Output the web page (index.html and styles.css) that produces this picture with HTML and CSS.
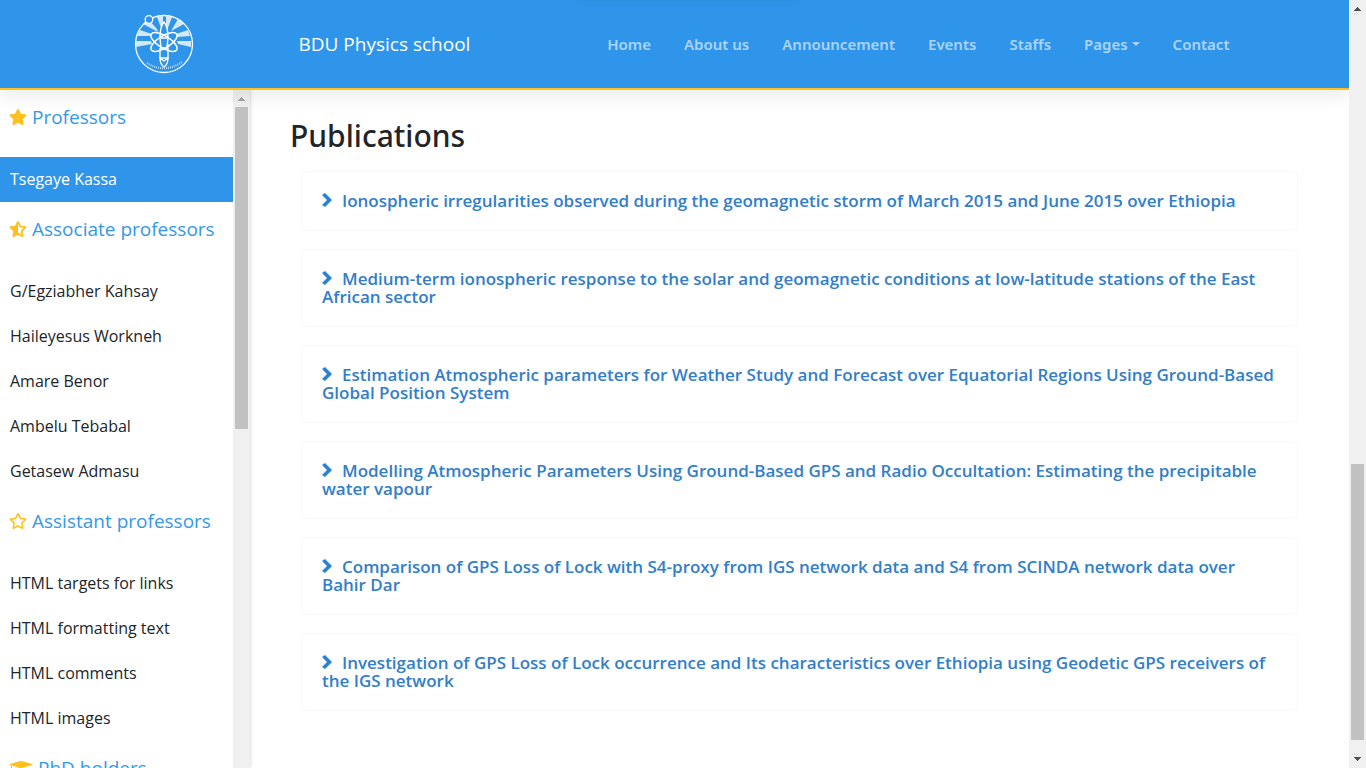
FILE: index.html
```html
<!DOCTYPE html>
<html lang="en">
<head>
<meta charset="utf-8">
<meta name="viewport" content="width=device-width, initial-scale=1">
<title>BDU Physics school</title>
<link rel="stylesheet" href="styles.css">
</head>
<body>
<div class="app">
  <div class="page">
    <header class="header">
      <div class="header-inner">
        <a class="logo" href="#" aria-label="Physics department">
          <svg viewBox="0 0 80 80" width="80" height="80" fill="none" stroke="#fff">
            <g fill="#d3e8fa" stroke="none">
              <path d="M39 29 33 13 39 12Z"/>
              <path d="M42 29 42 12 48 13Z"/>
              <path d="M34 28 19 20 23 16 26 17 33 25Z"/>
              <path d="M47 27 54 15 60 20Z"/>
              <path d="M27 32 13 32 16 26 28 30Z"/>
              <path d="M52 30 64 26 66 32 53 33Z"/>
              <path d="M28 40 12 43 12 37 27 37Z"/>
              <path d="M53 37 67 37 67 43 54 40Z"/>
            </g>
            <circle cx="40" cy="40" r="28.5" stroke-width="1.3"/>
            <circle cx="25" cy="15.500" r="3.800" fill="#2f95ea" stroke-width="1.300"/>
            <path d="M36 34C36 27 36.500 22 40 18C43.500 22 44 27 44 34L43 44H37ZM37 34H43M36 44V54H44V44" fill="#2f95ea" stroke-width="1.400"/>
            <ellipse cx="40" cy="38" rx="15" ry="6" transform="rotate(32 40 38)" stroke-width="1.500"/>
            <ellipse cx="40" cy="38" rx="15" ry="6" transform="rotate(-32 40 38)" stroke-width="1.500"/>
            <circle cx="44" cy="42" r="1.700" fill="#fff" stroke="none"/>
            <path d="M36 54C36 58 37 61 40 63C43 61 44 58 44 54L40 57Z" stroke-width="1.300"/>
            <path d="M23 59Q40 70 58 58" stroke="#bddcf8" stroke-width="2" stroke-dasharray="1 1"/>
          </svg>
        </a>
        <a class="brand" href="#">BDU Physics school</a>
        <nav class="nav" aria-label="Main">
          <a href="#">Home</a>
          <a href="#">About us</a>
          <a href="#">Announcement</a>
          <a href="#">Events</a>
          <a href="#">Staffs</a>
          <button type="button" class="nav-drop">Pages</button>
          <a href="#">Contact</a>
        </nav>
      </div>
    </header>
    <div class="body">
      <aside class="sidebar">
        <div class="side-list">
          <h2 class="group"><svg viewBox="0 0 576 512" width="18" height="16"><path d="M259 18 194 150 48 171c-26 4-37 36-18 55l106 103-25 145c-4 26 23 46 46 34l131-69 131 69c23 12 50-8 46-34l-25-145 106-103c19-19 8-51-18-55l-146-21-65-132c-12-24-46-24-58 0z"/></svg>Professors</h2>
          <a class="person active" href="#">Tsegaye Kassa</a>
          <h2 class="group"><svg viewBox="0 0 576 512" width="18" height="16"><path fill-rule="evenodd" d="M259 18 194 150 48 171c-26 4-37 36-18 55l106 103-25 145c-4 26 23 46 46 34l131-69 131 69c23 12 50-8 46-34l-25-145 106-103c19-19 8-51-18-55l-146-21-65-132c-12-24-46-24-58 0zM288 85l55 115 123 18-89 87 21 123-110-58z"/></svg>Associate professors</h2>
          <a class="person" href="#">G/Egziabher Kahsay</a>
          <a class="person" href="#">Haileyesus Workneh</a>
          <a class="person" href="#">Amare Benor</a>
          <a class="person" href="#">Ambelu Tebabal</a>
          <a class="person" href="#">Getasew Admasu</a>
          <h2 class="group"><svg viewBox="0 0 576 512" width="18" height="16"><path fill-rule="evenodd" d="M259 18 194 150 48 171c-26 4-37 36-18 55l106 103-25 145c-4 26 23 46 46 34l131-69 131 69c23 12 50-8 46-34l-25-145 106-103c19-19 8-51-18-55l-146-21-65-132c-12-24-46-24-58 0zM288 72l-60 123-135 20 98 95-23 135 120-63 120 63-23-135 98-95-135-20z"/></svg>Assistant professors</h2>
          <a class="person" href="#">HTML targets for links</a>
          <a class="person" href="#">HTML formatting text</a>
          <a class="person" href="#">HTML comments</a>
          <a class="person" href="#">HTML images</a>
          <h2 class="group"><svg viewBox="0 0 24 18" width="24" height="18"><path d="M1 5 11 2Q12 1.700 13 2L23 5Q24 5.500 23 6L13 9Q12 9.300 11 9L1 6Q0 5.500 1 5ZM5 9 12 11 19 9V13Q12 17 5 13ZM2 7H3V14H1Z"/></svg>PhD holders</h2>
        </div>
        <div class="bar bar-side" aria-hidden="true">
          <svg class="arrow" viewBox="0 0 7 4" width="7" height="4"><path d="M3 0H4V1H5V2H6V3H7V4H0V3H1V2H2V1H3Z"/></svg>
          <span class="thumb"></span>
        </div>
      </aside>
      <main class="main">
        <h1 class="title">Publications</h1>
        <div class="cards">
          <button type="button" class="card"><svg viewBox="0 0 10 14" width="10" height="14"><path d="M3 0 10 7 3 14 0 12 5 7 0 2Z"/></svg>Ionospheric irregularities observed during the geomagnetic storm of March 2015 and June 2015 over Ethiopia</button>
          <button type="button" class="card"><svg viewBox="0 0 10 14" width="10" height="14"><path d="M3 0 10 7 3 14 0 12 5 7 0 2Z"/></svg>Medium-term ionospheric response to the solar and geomagnetic conditions at low-latitude stations of the East African sector</button>
          <button type="button" class="card"><svg viewBox="0 0 10 14" width="10" height="14"><path d="M3 0 10 7 3 14 0 12 5 7 0 2Z"/></svg>Estimation Atmospheric parameters for Weather Study and Forecast over Equatorial Regions Using Ground-Based Global Position System</button>
          <button type="button" class="card"><svg viewBox="0 0 10 14" width="10" height="14"><path d="M3 0 10 7 3 14 0 12 5 7 0 2Z"/></svg>Modelling Atmospheric Parameters Using Ground-Based GPS and Radio Occultation: Estimating the precipitable water vapour</button>
          <button type="button" class="card"><svg viewBox="0 0 10 14" width="10" height="14"><path d="M3 0 10 7 3 14 0 12 5 7 0 2Z"/></svg>Comparison of GPS Loss of Lock with S4-proxy from IGS network data and S4 from SCINDA network data over Bahir Dar</button>
          <button type="button" class="card"><svg viewBox="0 0 10 14" width="10" height="14"><path d="M3 0 10 7 3 14 0 12 5 7 0 2Z"/></svg>Investigation of GPS Loss of Lock occurrence and Its characteristics over Ethiopia using Geodetic GPS receivers of the IGS network</button>
        </div>
      </main>
    </div>
  </div>
  <div class="bar bar-page" aria-hidden="true">
    <svg class="arrow" viewBox="0 0 7 4" width="7" height="4"><path d="M3 0H4V1H5V2H6V3H7V4H0V3H1V2H2V1H3Z"/></svg>
    <span class="thumb"></span>
    <svg class="arrow arrow-down" viewBox="0 0 7 4" width="7" height="4"><path d="M0 0H7V1H6V2H5V3H4V4H3V3H2V2H1V1H0Z"/></svg>
  </div>
</div>
</body>
</html>
```
FILE: styles.css
```css
* { box-sizing: border-box; }
body {
  margin: 0;
  font-family: "Open Sans", "Noto Sans", sans-serif;
  color: #212529;
  background: #fff;
}
a { color: inherit; text-decoration: none; }
button { font: inherit; color: inherit; background: none; border: 0; padding: 0; cursor: pointer; }

.app { display: flex; height: 100vh; overflow: hidden; }
.page { flex: 1; min-width: 0; display: flex; flex-direction: column; overflow: hidden; }

.header {
  position: relative;
  z-index: 2;
  background: #2f95ea;
  border-bottom: 2px solid #ffc120;
  box-shadow: 0 8px 16px rgba(0, 0, 0, 0.07);
}
.header::before {
  content: "";
  position: absolute;
  top: -10px;
  left: 43%;
  width: 16%;
  height: 8px;
  box-shadow: 0 2px 8px rgba(0, 0, 0, 0.08);
}
.header-inner {
  max-width: 1140px;
  height: 88px;
  margin: 0 auto;
  padding: 0 15px;
  display: flex;
  align-items: center;
}
.logo { display: flex; width: 179px; padding-left: 4px; }
.brand { font-size: 19px; color: #fff; line-height: 30px; }
.nav {
  margin-left: auto;
  display: flex;
  gap: 33px;
  font-family: "Noto Sans", sans-serif;
  font-size: 15px;
  font-weight: 600;
  line-height: 24px;
  color: rgba(255, 255, 255, 0.6);
}
.nav-drop { display: flex; align-items: center; gap: 4px; }
.nav-drop::after {
  content: "";
  border: 4px solid transparent;
  border-top-color: currentColor;
  border-bottom: 0;
}

.body { flex: 1; min-height: 0; display: flex; }
.sidebar {
  flex: 0 0 250px;
  display: flex;
  box-shadow: 0 0 4px rgba(0, 0, 0, 0.2);
}
.side-list { flex: 1; min-width: 0; overflow: hidden; font-size: 16px; }
.group {
  display: flex;
  align-items: center;
  gap: 5px;
  height: 67px;
  margin: 0;
  padding: 0 9px 14px;
  font-size: 19px;
  font-weight: 400;
  white-space: nowrap;
  color: #3498ea;
}
.group svg { fill: #ffc120; flex: none; }
.person { display: block; padding: 0 10px; line-height: 45px; }
.person.active { background: #2f95ea; color: #fff; }

.bar {
  display: flex;
  flex-direction: column;
  align-items: center;
  flex: 0 0 17px;
  background: #f0f0f0;
}
.thumb { width: 13px; background: #c1c1c1; }
.arrow { flex: none; margin: 7px 0 6px; fill: #505050; }
.bar-side .arrow { fill: #a3a3a3; }
.bar-side .thumb { height: 322px; }
.bar-page .thumb { height: 276px; margin-top: auto; }
.bar-page .arrow-down { margin: 17px 0 7px; }

.main { flex: 1; min-width: 0; padding: 27px 51px 0 40px; overflow: hidden; }
.title { margin: 0; font-family: "Noto Sans", sans-serif; font-size: 30px; font-weight: 500; line-height: 38px; }
.cards { display: flex; flex-direction: column; gap: 18px; padding: 16px 0 0 11px; }
.card {
  padding: 20px;
  border: 1px solid #f8f8f8;
  border-radius: 6px;
  text-align: left;
  font-size: 17px;
  font-weight: 600;
  line-height: 18px;
  color: #317ecb;
}
.card svg { margin-right: 10px; fill: #2583d5; }
```
